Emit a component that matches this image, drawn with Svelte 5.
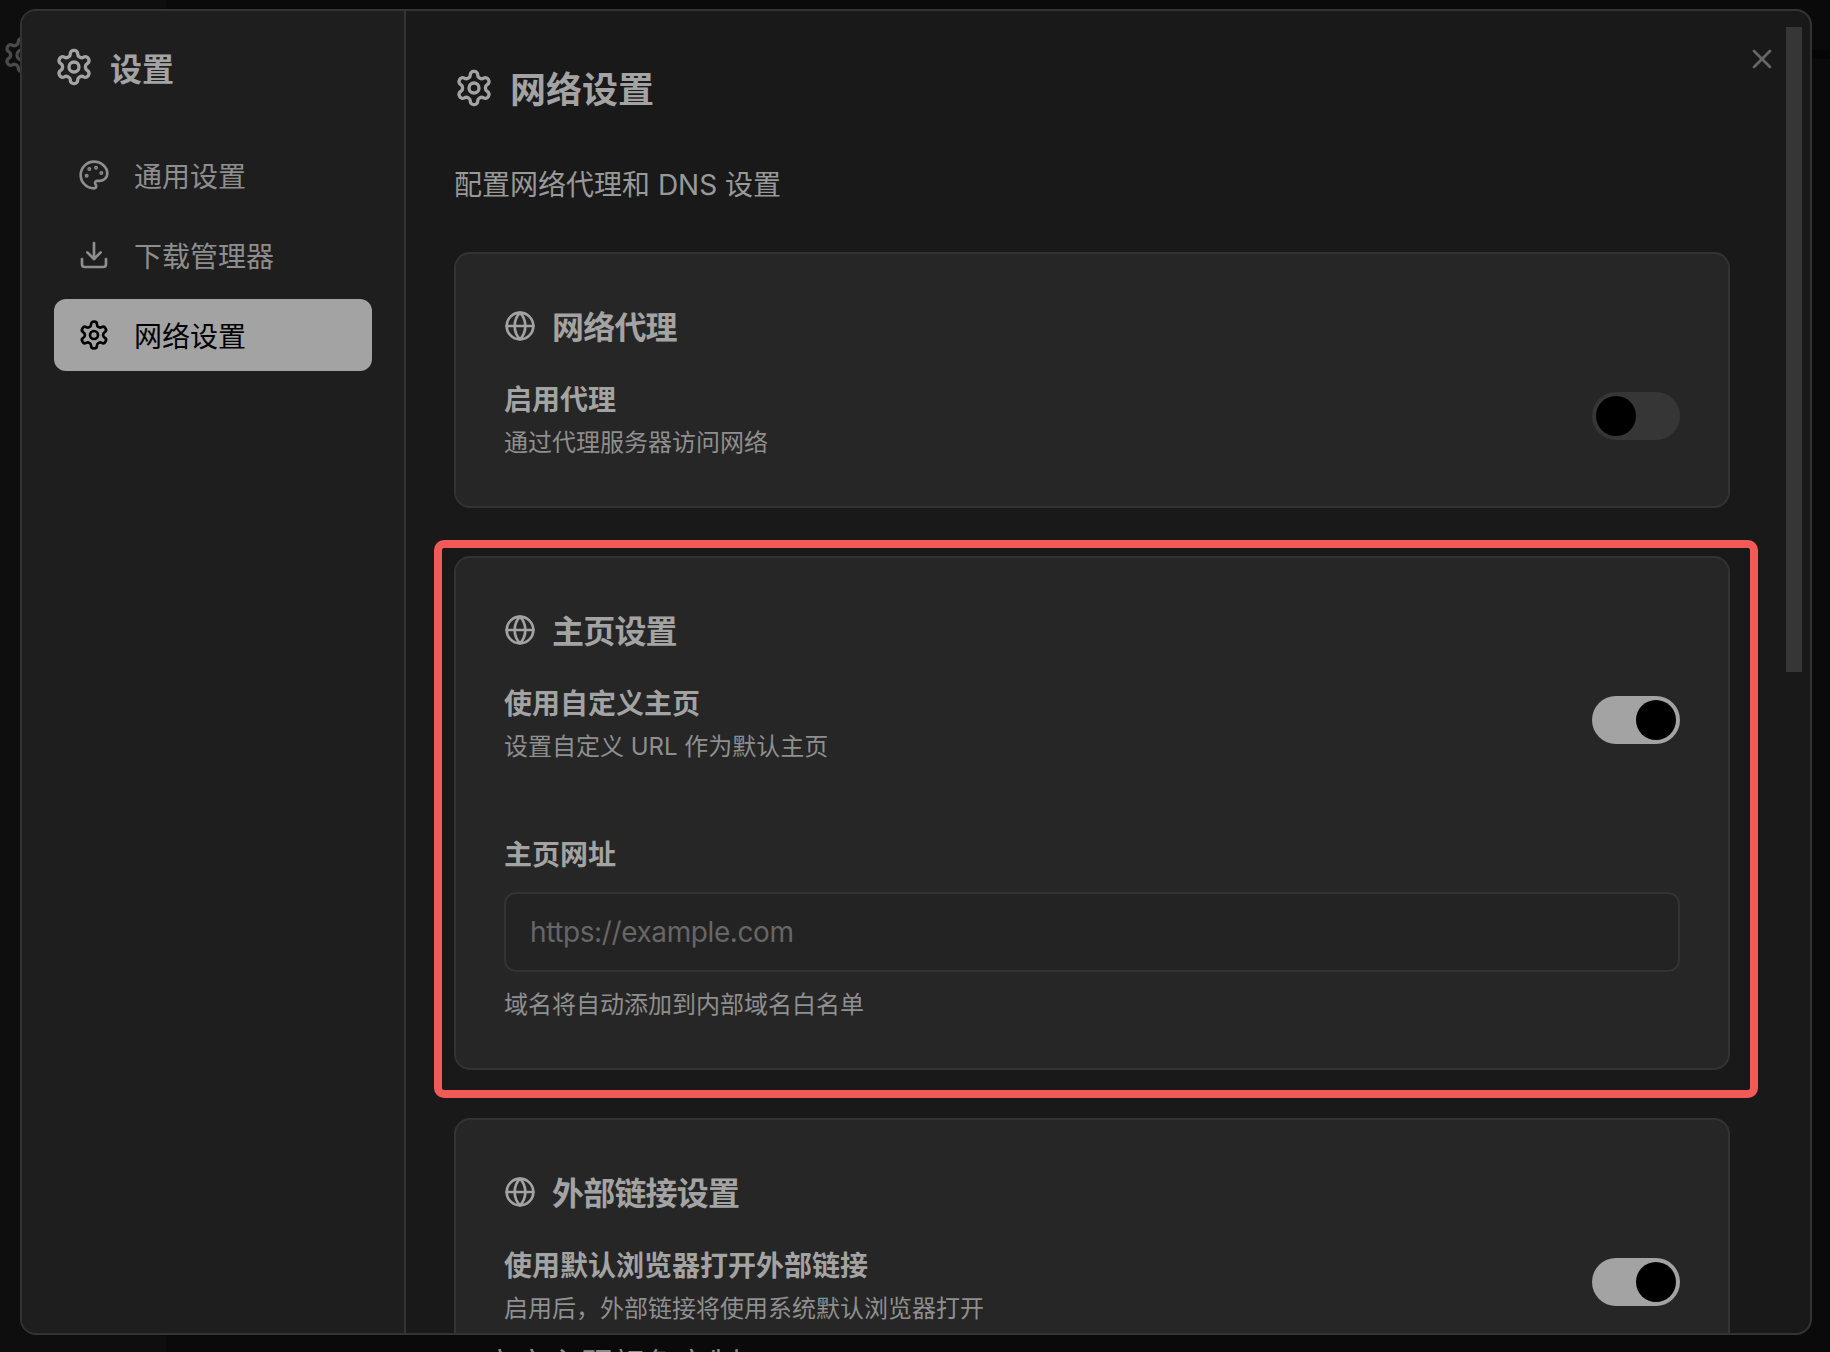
<script>
  let useProxy = $state(false);
  let useHomepage = $state(true);
  let useBrowser = $state(true);
  let homepage = $state('');
</script>

{#snippet gear(cls)}
  <svg class={cls} viewBox="0 0 24 24" fill="none" stroke="currentColor" stroke-width="2" stroke-linecap="round" stroke-linejoin="round">
    <path d="M12.22 2h-.44a2 2 0 0 0-2 2v.18a2 2 0 0 1-1 1.73l-.43.25a2 2 0 0 1-2 0l-.15-.08a2 2 0 0 0-2.73.73l-.22.38a2 2 0 0 0 .73 2.73l.15.1a2 2 0 0 1 1 1.72v.51a2 2 0 0 1-1 1.74l-.15.09a2 2 0 0 0-.73 2.73l.22.38a2 2 0 0 0 2.73.73l.15-.08a2 2 0 0 1 2 0l.43.25a2 2 0 0 1 1 1.73V20a2 2 0 0 0 2 2h.44a2 2 0 0 0 2-2v-.18a2 2 0 0 1 1-1.73l.43-.25a2 2 0 0 1 2 0l.15.08a2 2 0 0 0 2.73-.73l.22-.39a2 2 0 0 0-.73-2.73l-.15-.08a2 2 0 0 1-1-1.74v-.5a2 2 0 0 1 1-1.74l.15-.09a2 2 0 0 0 .73-2.73l-.22-.38a2 2 0 0 0-2.73-.73l-.15.08a2 2 0 0 1-2 0l-.43-.25a2 2 0 0 1-1-1.73V4a2 2 0 0 0-2-2z"/>
    <circle cx="12" cy="12" r="3"/>
  </svg>
{/snippet}

{#snippet globe()}
  <svg class="icon-card" viewBox="0 0 24 24" fill="none" stroke="currentColor" stroke-width="2" stroke-linecap="round" stroke-linejoin="round">
    <circle cx="12" cy="12" r="10"/>
    <path d="M12 2a14.5 14.5 0 0 0 0 20 14.5 14.5 0 0 0 0-20"/>
    <path d="M2 12h20"/>
  </svg>
{/snippet}

{#snippet toggle(on, flip)}
  <button class="toggle" class:on onclick={flip} aria-label="toggle"><span class="thumb"></span></button>
{/snippet}

<div class="page">
  <!-- app behind the dialog -->
  <div class="backdrop">
    <div class="backdrop-side"></div>
    <div class="backdrop-band"></div>
    <span class="backdrop-gear">{@render gear('icon-title')}</span>
    <span class="backdrop-text">高亮主题颜色定制</span>
  </div>

  <div class="dialog">
    <aside class="sidebar">
      <div class="side-title">
        {@render gear('icon-title')}
        <span>设置</span>
      </div>
      <nav>
        <div class="nav-item">
          <svg class="icon-nav palette" viewBox="0 0 24 24" fill="none" stroke="currentColor" stroke-width="2" stroke-linecap="round" stroke-linejoin="round">
            <circle cx="13.5" cy="6.5" r=".5" fill="currentColor"/>
            <circle cx="17.5" cy="10.5" r=".5" fill="currentColor"/>
            <circle cx="8.5" cy="7.5" r=".5" fill="currentColor"/>
            <circle cx="6.5" cy="12.5" r=".5" fill="currentColor"/>
            <path d="M12 2C6.5 2 2 6.5 2 12s4.5 10 10 10c.926 0 1.648-.746 1.648-1.688 0-.437-.18-.835-.437-1.125-.29-.289-.438-.652-.438-1.125a1.64 1.64 0 0 1 1.668-1.668h1.996c3.051 0 5.555-2.503 5.555-5.554C21.965 6.012 17.461 2 12 2z"/>
          </svg>
          <span>通用设置</span>
        </div>
        <div class="nav-item">
          <svg class="icon-nav" viewBox="0 0 24 24" fill="none" stroke="currentColor" stroke-width="2" stroke-linecap="round" stroke-linejoin="round">
            <path d="M21 15v4a2 2 0 0 1-2 2H5a2 2 0 0 1-2-2v-4"/>
            <polyline points="7 10 12 15 17 10"/>
            <line x1="12" y1="15" x2="12" y2="3"/>
          </svg>
          <span>下载管理器</span>
        </div>
        <div class="nav-item active">
          {@render gear('icon-nav')}
          <span>网络设置</span>
        </div>
      </nav>
    </aside>

    <main class="content">
      <div class="heading">
        {@render gear('icon-title')}
        <h1>网络设置</h1>
      </div>
      <p class="subtitle">配置网络代理和 DNS 设置</p>

      <section class="card">
        <div class="card-title">{@render globe()}<h2>网络代理</h2></div>
        <div class="row">
          <div>
            <div class="label">启用代理</div>
            <div class="desc">通过代理服务器访问网络</div>
          </div>
          {@render toggle(useProxy, () => (useProxy = !useProxy))}
        </div>
      </section>

      <section class="card">
        <div class="card-title">{@render globe()}<h2>主页设置</h2></div>
        <div class="row">
          <div>
            <div class="label">使用自定义主页</div>
            <div class="desc">设置自定义 URL 作为默认主页</div>
          </div>
          {@render toggle(useHomepage, () => (useHomepage = !useHomepage))}
        </div>
        <div class="field">
          <label class="label" for="homepage">主页网址</label>
          <input id="homepage" type="text" placeholder="https://example.com" bind:value={homepage} />
          <div class="desc hint">域名将自动添加到内部域名白名单</div>
        </div>
      </section>

      <section class="card">
        <div class="card-title">{@render globe()}<h2>外部链接设置</h2></div>
        <div class="row">
          <div>
            <div class="label">使用默认浏览器打开外部链接</div>
            <div class="desc">启用后，外部链接将使用系统默认浏览器打开</div>
          </div>
          {@render toggle(useBrowser, () => (useBrowser = !useBrowser))}
        </div>
      </section>
    </main>

    <div class="scroll-thumb"></div>
    <button class="close" aria-label="close">
      <svg viewBox="0 0 24 24" fill="none" stroke="currentColor" stroke-width="2" stroke-linecap="round" stroke-linejoin="round">
        <path d="M18 6 6 18"/>
        <path d="m6 6 12 12"/>
      </svg>
    </button>
  </div>

  <!-- annotation from the screenshot -->
  <div class="highlight"></div>
</div>

<style>
  :global(body) {
    margin: 0;
    background: #0a0a0a;
  }

  .page {
    position: relative;
    height: 1352px;
    padding: 9px 18px 17px 20px;
    box-sizing: border-box;
    overflow: hidden;
    font-family: Inter, "Noto Sans CJK SC", sans-serif;
    color: #a3a3a3;
  }

  .backdrop {
    position: absolute;
    inset: 0;
  }
  .backdrop-side {
    position: absolute;
    left: 0;
    top: 0;
    bottom: 0;
    width: 166px;
    background: #0e0e0e;
  }
  .backdrop-band {
    position: absolute;
    left: 1812px;
    right: 0;
    top: 50px;
    height: 9px;
    background: #050505;
  }
  .backdrop-gear {
    position: absolute;
    left: 2px;
    top: 35px;
    color: #4a4a4a;
  }
  .backdrop-text {
    position: absolute;
    left: 484px;
    top: 1343px;
    font-size: 32px;
    line-height: 44px;
    color: #8a8a8a;
  }

  .dialog {
    position: relative;
    display: flex;
    height: 100%;
    box-sizing: border-box;
    border: 2px solid #333;
    border-radius: 16px;
    background: #191919;
    overflow: hidden;
  }

  .sidebar {
    flex: 0 0 318px;
    padding: 34px 32px 0;
    background: #1e1e1e;
    border-right: 2px solid #333;
  }
  .side-title {
    display: flex;
    align-items: center;
    gap: 16px;
    height: 44px;
    font-size: 32px;
    font-weight: 700;
  }
  nav {
    display: flex;
    flex-direction: column;
    gap: 8px;
    margin-top: 50px;
  }
  .nav-item {
    display: flex;
    align-items: center;
    gap: 24px;
    height: 72px;
    padding: 0 24px;
    border-radius: 12px;
    font-size: 28px;
    color: #8e8e8e;
  }
  .nav-item.active {
    background: #a3a3a3;
    color: #000;
  }

  .icon-title {
    display: block;
    width: 40px;
    height: 40px;
    flex: none;
  }
  .icon-nav {
    width: 32px;
    height: 32px;
    flex: none;
  }
  .icon-card {
    width: 32px;
    height: 32px;
    margin-top: 2px;
    flex: none;
  }

  .content {
    flex: 1;
    min-width: 0;
    padding: 53px 80px 0 48px;
    overflow: hidden;
  }
  .heading {
    display: flex;
    align-items: center;
    gap: 16px;
    height: 48px;
  }
  h1 {
    margin: 0;
    padding-bottom: 2px;
    font-size: 36px;
    font-weight: 700;
  }
  .subtitle {
    margin: 53px 0 47px;
    font-size: 28px;
    line-height: 40px;
    color: #999;
  }

  .card {
    box-sizing: border-box;
    padding: 48px 48px 47px;
    margin-bottom: 48px;
    border: 2px solid #333;
    border-radius: 16px;
    background: #262626;
  }
  .card-title {
    display: flex;
    align-items: center;
    gap: 16px;
    height: 46px;
  }
  h2 {
    margin: 0;
    font-size: 32px;
    font-weight: 700;
    letter-spacing: -0.8px;
  }
  .row {
    display: flex;
    justify-content: space-between;
    align-items: flex-start;
    margin-top: 32px;
  }
  .label {
    display: block;
    font-size: 28px;
    line-height: 40px;
    font-weight: 600;
    color: #a3a3a3;
  }
  .desc {
    margin-top: 7px;
    font-size: 24px;
    line-height: 32px;
    color: #8f8f8f;
  }

  .toggle {
    position: relative;
    width: 88px;
    height: 48px;
    margin-top: 12px;
    padding: 0;
    border: 0;
    border-radius: 24px;
    background: #363636;
  }
  .toggle.on {
    background: #a3a3a3;
  }
  .thumb {
    position: absolute;
    left: 4px;
    top: 4px;
    width: 40px;
    height: 40px;
    border-radius: 50%;
    background: #000;
  }
  .toggle.on .thumb {
    left: 44px;
  }

  .field {
    margin-top: 72px;
  }
  input {
    display: block;
    width: 100%;
    height: 80px;
    box-sizing: border-box;
    margin-top: 17px;
    padding: 0 24px;
    border: 2px solid #333;
    border-radius: 12px;
    background: #232323;
    font-family: inherit;
    font-size: 28px;
    letter-spacing: -0.4px;
    color: #a3a3a3;
    outline: none;
  }
  input::placeholder {
    color: #666;
    opacity: 1;
  }
  .hint {
    margin-top: 17px;
  }

  .scroll-thumb {
    position: absolute;
    right: 8px;
    top: 16px;
    width: 16px;
    height: 645px;
    background: #363636;
  }
  .close {
    position: absolute;
    right: 32px;
    top: 32px;
    width: 32px;
    height: 32px;
    padding: 0;
    border: 0;
    background: none;
    color: #666;
  }
  .close svg {
    display: block;
    width: 32px;
    height: 32px;
  }

  .highlight {
    position: absolute;
    left: 434px;
    top: 540px;
    width: 1324px;
    height: 558px;
    box-sizing: border-box;
    border: 8px solid #f25a58;
    border-radius: 10px;
    pointer-events: none;
  }
</style>
